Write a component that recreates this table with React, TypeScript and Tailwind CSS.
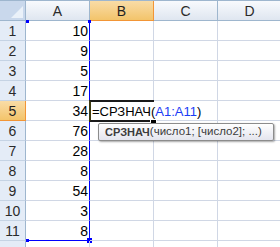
import React from 'react';

const values = [10, 9, 5, 17, 34, 76, 28, 8, 54, 3, 8];
const cols = ['A', 'B', 'C', 'D'];

const orange = 'border-[#f29536] bg-gradient-to-b from-[#f9dca6] to-[#f3c46a] text-[#1f1f1f]';

function ColHeader({ label, active }: { label: string; active?: boolean }) {
  return (
    <div
      className={
        'w-[64px] shrink-0 h-full flex items-center justify-center border-r border-b ' +
        (active ? orange : 'border-[#9eb6ce] bg-gradient-to-b from-[#f8fafd] to-[#dfe6f0] text-[#2b2b2b]')
      }
    >
      {label}
    </div>
  );
}

// маленький квадратик на углу выделенного диапазона
function Handle({ className }: { className: string }) {
  return <span className={'absolute bg-[#0000ff] ' + className} />;
}

function Editor() {
  return (
    <div className="absolute -left-px -top-px z-10 h-[22px] flex">
      <div className="w-[65px] h-full border-2 border-[#1a1a1a] border-l-[#3d3a10] bg-white" />
      <span className="absolute -right-[2px] bottom-[-2px] w-[5px] h-[5px] bg-black outline outline-1 outline-white" />
      <div className="absolute left-[3px] top-[2px] h-[18px] pr-[12px] flex items-center whitespace-nowrap bg-white text-[13px] text-black">
        =СРЗНАЧ(<span className="text-[#1a3bf5]">A1:A11</span>)
      </div>
    </div>
  );
}

function Tooltip() {
  return (
    <div className="absolute left-[8px] top-[2px] z-20 w-[176px] h-[18px] rounded-[2px] border border-[#8c8c8c] bg-gradient-to-b from-white to-[#e4e5ee] shadow-[1px_1px_2px_rgba(0,0,0,0.35)] flex items-center pl-[6px] text-[#3c3c3c] whitespace-nowrap">
      <span className="font-bold text-[11px]">СРЗНАЧ</span>
      <span className="text-[11.5px]">(число1; [число2]; ...)</span>
    </div>
  );
}

function Row({ n, value }: { n: number; value?: number }) {
  const active = n === 5;
  const inRange = n <= 11;
  return (
    <div className="flex h-[20px] shrink-0">
      <div
        className={
          'w-[26px] shrink-0 flex items-center justify-center border-r border-b ' +
          (active ? orange : 'border-r-[#9eb6ce] border-b-[#c5d3e4] bg-[#e4ecf7] text-[#2b2b2b]')
        }
      >
        {inRange ? n : null}
      </div>
      <div
        className={
          'relative w-[64px] shrink-0 flex items-center justify-end pr-[1px] border-r border-b ' +
          (inRange ? 'border-r-[#0000ff] ' : 'border-r-[#d0d7e5] ') +
          (n === 11 ? 'border-b-[#0000ff]' : 'border-b-[#d0d7e5]')
        }
      >
        {value}
        {n === 1 && <Handle className="left-0 top-[-1px] w-[3px] h-[3px]" />}
        {n === 1 && <Handle className="right-[-2px] top-[-1px] w-[3px] h-[3px]" />}
        {n === 11 && <Handle className="left-0 bottom-[-2px] w-[3px] h-[3px]" />}
        {n === 11 && <Handle className="right-[-3px] bottom-[-3px] w-[5px] h-[5px]" />}
      </div>
      <div className="relative w-[64px] shrink-0 border-r border-b border-[#d0d7e5]">
        {active && <Editor />}
        {n === 6 && <Tooltip />}
      </div>
      <div className="w-[64px] shrink-0 border-r border-b border-[#d0d7e5]" />
      <div className="w-[64px] shrink-0 border-r border-b border-[#d0d7e5]" />
    </div>
  );
}

export default function App() {
  return (
    <div className="w-[280px] h-[247px] overflow-hidden flex flex-col bg-white text-[14px] leading-none font-['Liberation_Sans',Arial,sans-serif]">
      <div className="flex h-[21px] shrink-0 border-t border-[#9eb6ce]">
        <div className="w-[26px] shrink-0 h-full flex items-end justify-end p-[2px] border-r border-b border-[#9eb6ce] bg-[#c9d8ec]">
          <svg width="12" height="12" viewBox="0 0 12 12">
            <polygon points="12,0 12,12 0,12" fill="#eaf1f9" />
          </svg>
        </div>
        {cols.map((c) => (
          <ColHeader key={c} label={c} active={c === 'B'} />
        ))}
      </div>

      {[...values, undefined].map((v, i) => (
        <Row key={i} n={i + 1} value={v} />
      ))}
    </div>
  );
}
